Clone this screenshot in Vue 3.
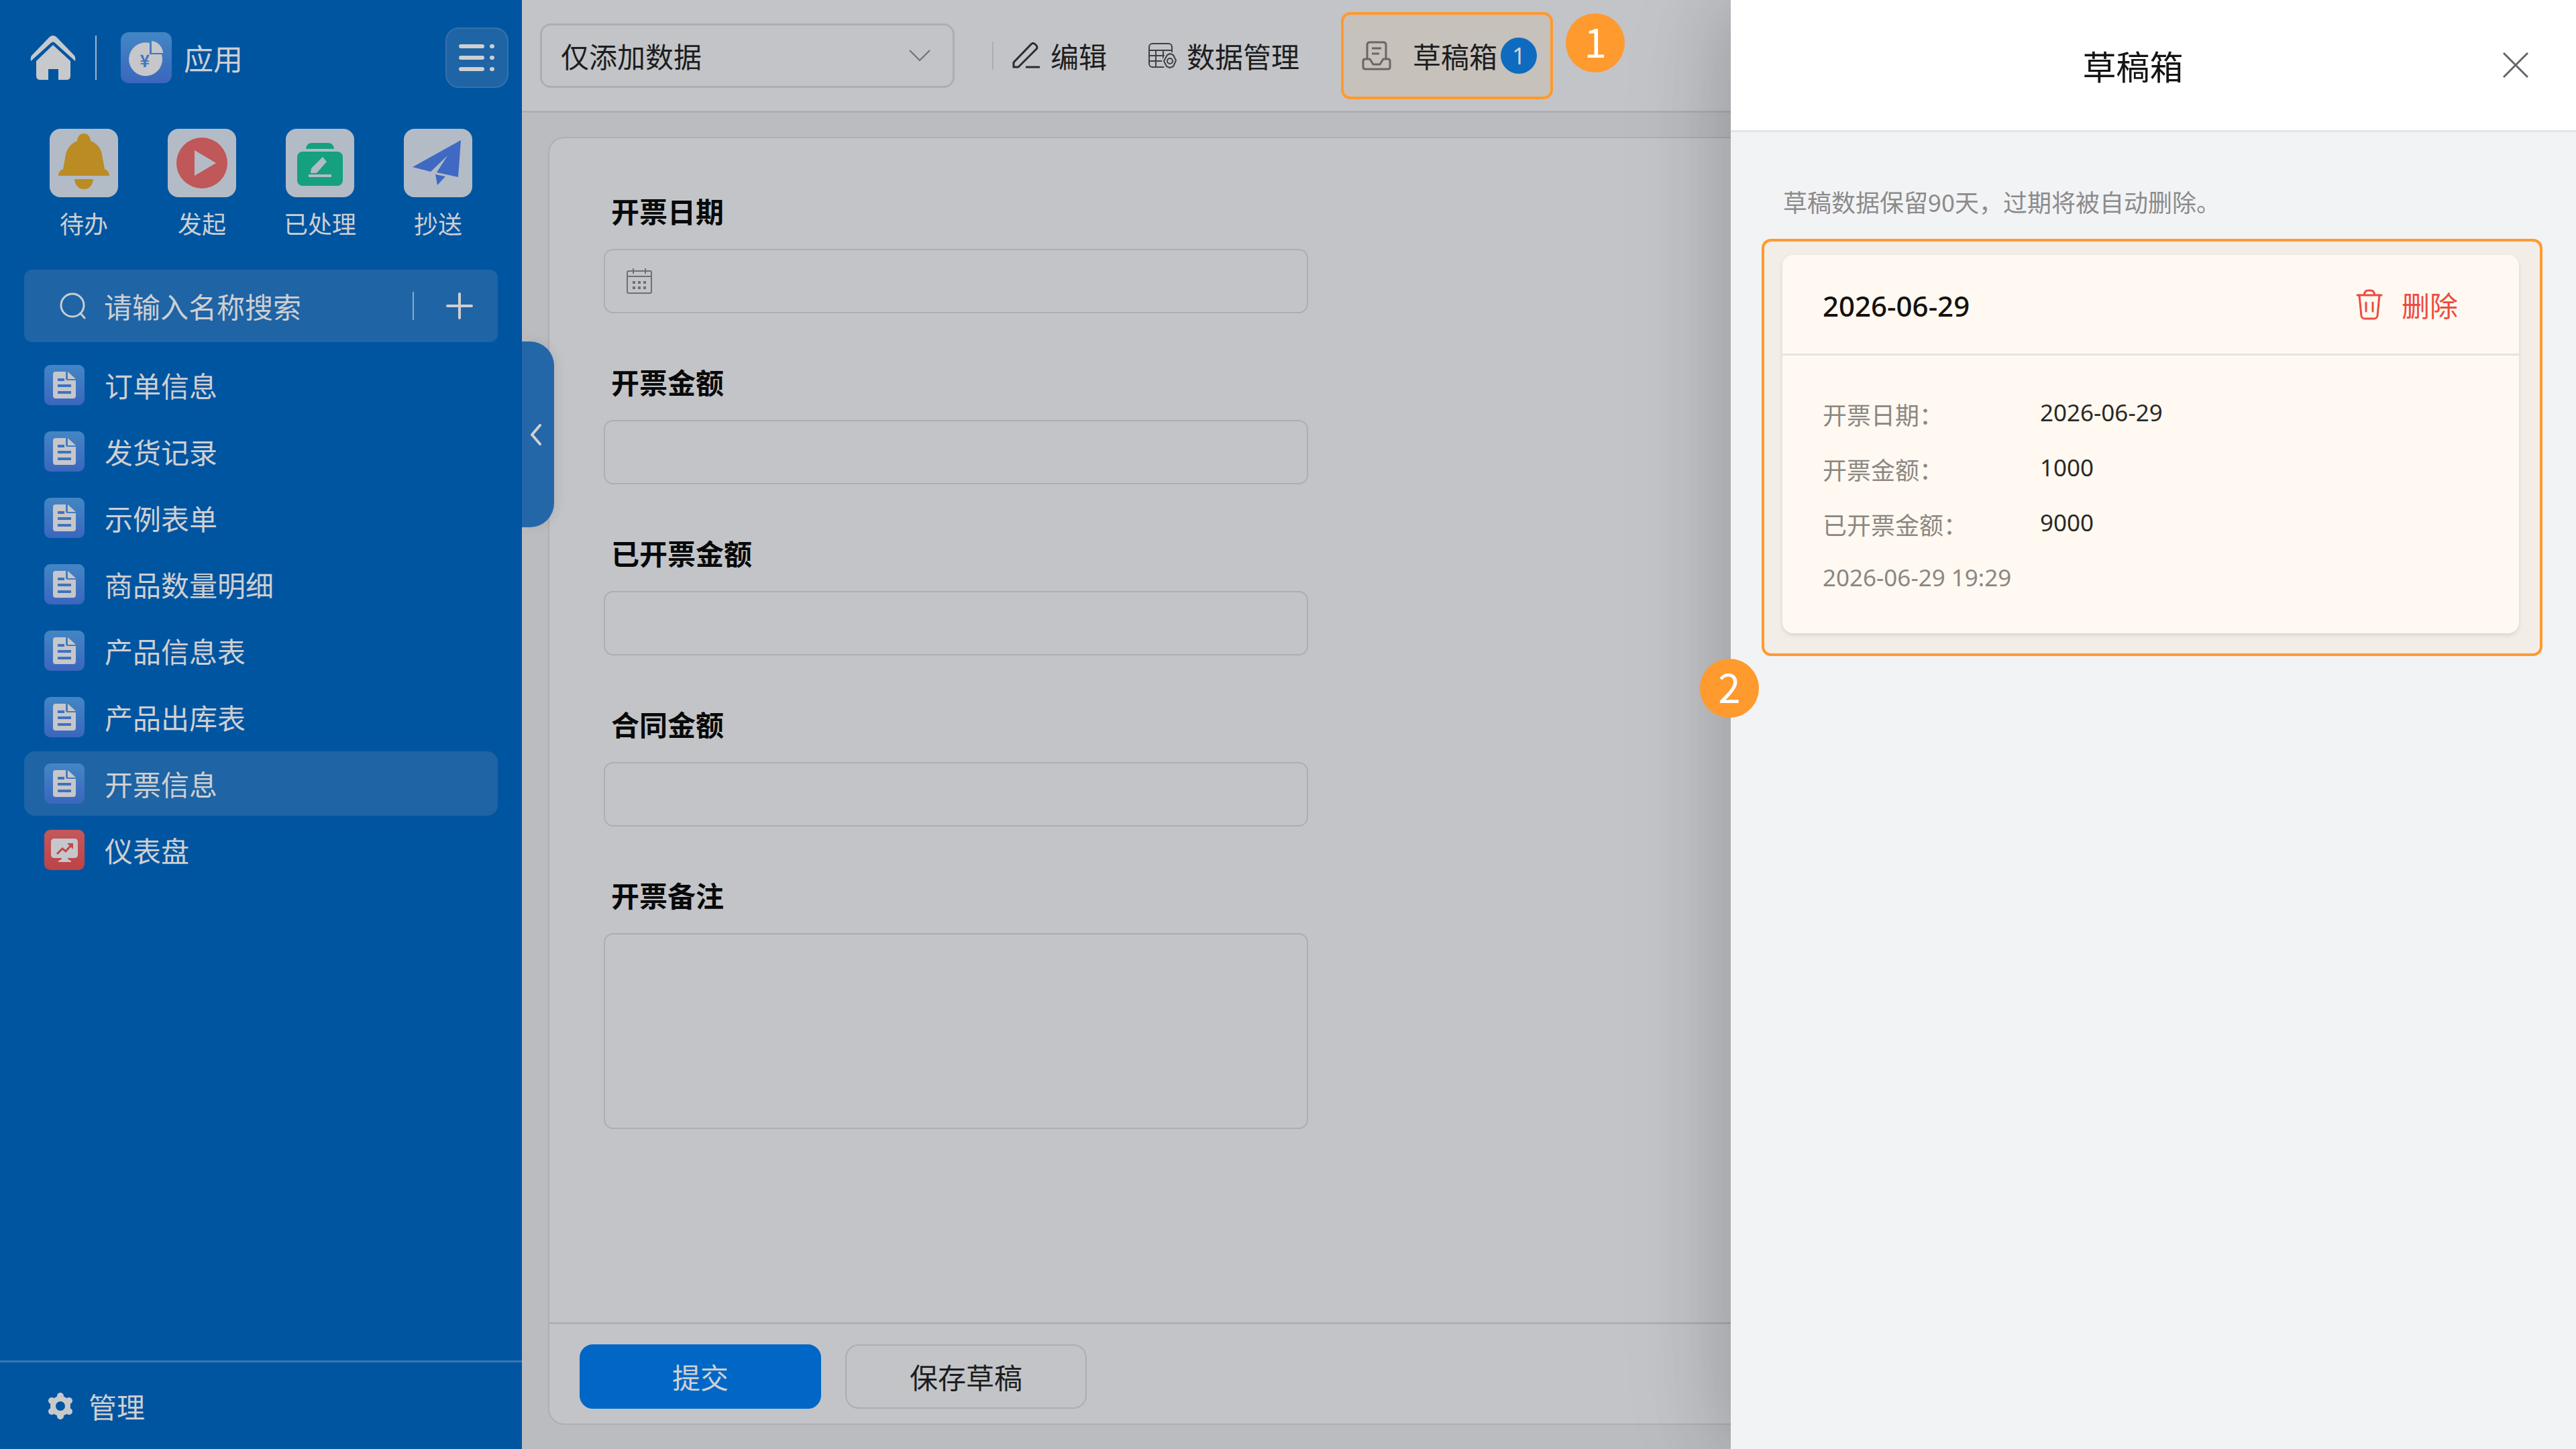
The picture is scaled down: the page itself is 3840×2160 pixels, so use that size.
<script setup>
import { ref } from 'vue';

const quickLinks = [
  { id: 'todo', name: '待办' },
  { id: 'start', name: '发起' },
  { id: 'done', name: '已处理' },
  { id: 'copy', name: '抄送' }
];

const menuItems = [
  { id: 1, name: '订单信息', type: 'form' },
  { id: 2, name: '发货记录', type: 'form' },
  { id: 3, name: '示例表单', type: 'form' },
  { id: 4, name: '商品数量明细', type: 'form' },
  { id: 5, name: '产品信息表', type: 'form' },
  { id: 6, name: '产品出库表', type: 'form' },
  { id: 7, name: '开票信息', type: 'form' },
  { id: 8, name: '仪表盘', type: 'dashboard' }
];

const fields = [
  { id: 'date', label: '开票日期', type: 'date' },
  { id: 'amount', label: '开票金额', type: 'text' },
  { id: 'invoiced', label: '已开票金额', type: 'text' },
  { id: 'contract', label: '合同金额', type: 'text' },
  { id: 'remark', label: '开票备注', type: 'textarea' }
];

const drafts = ref([
  {
    id: 1,
    title: '2026-06-29',
    rows: [
      { label: '开票日期：', value: '2026-06-29' },
      { label: '开票金额：', value: '1000' },
      { label: '已开票金额：', value: '9000' }
    ],
    time: '2026-06-29 19:29'
  }
]);

const activeId = ref(7);
const keyword = ref('');
const mode = ref('add');
const drawerOpen = ref(true);
const form = ref({ date: '', amount: '', invoiced: '', contract: '', remark: '' });

function selectItem(id) {
  activeId.value = id;
}

function removeDraft(id) {
  drafts.value = drafts.value.filter(d => d.id !== id);
}
</script>

<template>
  <div class="app">
    <aside class="sidebar">
      <div class="side-header">
        <button class="icon-button" aria-label="首页">
          <svg width="68" height="68" viewBox="0 0 68 68" fill="#c8c9cc">
            <path d="M29 3Q34-1 39 3L66 31Q68 34 67 39L37 12Q34 9 31 12L1 39Q0 34 2 31Z" />
            <path d="M34 15L60 39V61Q60 67 54 67H42V51H27V67H15Q9 67 9 61V39Z" />
          </svg>
        </button>
        <span class="side-divider"></span>
        <svg class="app-logo" width="76" height="76" viewBox="0 0 76 76">
          <defs>
            <linearGradient id="blueTile" x1="0" y1="0" x2="0" y2="1">
              <stop offset="0" stop-color="#4386c4" />
              <stop offset="1" stop-color="#3b66be" />
            </linearGradient>
            <linearGradient id="redTile" x1="0" y1="0" x2="0" y2="1">
              <stop offset="0" stop-color="#c4585b" />
              <stop offset="1" stop-color="#be4246" />
            </linearGradient>
          </defs>
          <rect width="76" height="76" rx="12" fill="url(#blueTile)" />
          <path d="M43 16A25 25 0 1 0 61 33H43Z" fill="#c6c7ca" />
          <path d="M46 13A19 19 0 0 1 63 31H46Z" fill="#c6c7ca" />
          <text x="36" y="52" text-anchor="middle" font-size="25" font-weight="700" fill="#3f76c1">¥</text>
        </svg>
        <span class="app-name">应用</span>
        <button class="menu-button" aria-label="菜单">
          <svg width="54" height="40" viewBox="0 0 54 40" stroke="#cfcfd1" stroke-width="6" stroke-linecap="round">
            <path d="M3 3H35M3 20H35M3 37H35M49 3H50M49 20H50M49 37H50" />
          </svg>
        </button>
      </div>

      <nav class="quick-links">
        <a v-for="link in quickLinks" :key="link.id" class="quick-link" href="#">
          <svg width="102" height="102" viewBox="0 0 102 102">
            <rect width="102" height="102" rx="16" fill="#b3bcc6" />
            <g v-if="link.id === 'todo'" fill="#bb8b24">
              <path d="M41 18A10 11 0 0 1 61 18C74 23 78 33 79 44L82 60Q89 63 89 70H13Q13 63 20 60L23 44C24 33 29 23 41 18Z" />
              <path d="M37 75H65Q63 90 51 90Q39 90 37 75Z" />
            </g>
            <g v-else-if="link.id === 'start'">
              <circle cx="51" cy="51" r="38" fill="#c05759" />
              <path d="M40 32L72 51L40 70Z" fill="#b3bcc6" />
            </g>
            <g v-else-if="link.id === 'done'">
              <path d="M30 30Q31 21 39 21H63Q71 21 72 30Z" fill="#15a07f" />
              <rect x="17" y="34" width="68" height="51" rx="8" fill="#15a07f" />
              <path d="M55 42L61 49L46 66H37L38 59ZM34 68H68V72H34Z" fill="#b3bcc6" />
            </g>
            <g v-else fill="#3f69c2">
              <path d="M85 17L81 72L49 65L65 40L40 64L13 57Z" />
              <path d="M47 68L62 71L50 84Z" />
            </g>
          </svg>
          <span>{{ link.name }}</span>
        </a>
      </nav>

      <div class="search">
        <svg width="40" height="40" viewBox="0 0 40 40" fill="none" stroke="#c8cdd3" stroke-width="3" stroke-linecap="round">
          <circle cx="19" cy="19" r="17" />
          <path d="M31 31L37 38" />
        </svg>
        <input v-model="keyword" type="text" placeholder="请输入名称搜索" aria-label="请输入名称搜索">
        <span class="search-divider"></span>
        <button class="icon-button" aria-label="新建">
          <svg width="40" height="40" viewBox="0 0 40 40" stroke="#cfcfd1" stroke-width="4" stroke-linecap="round">
            <path d="M2 20H38M20 2V38" />
          </svg>
        </button>
      </div>

      <ul class="menu">
        <li v-for="item in menuItems" :key="item.id">
          <a
            class="menu-item"
            :class="{ active: item.id === activeId }"
            href="#"
            @click.prevent="selectItem(item.id)"
          >
            <svg v-if="item.type === 'form'" width="60" height="60" viewBox="0 0 60 60">
              <rect width="60" height="60" rx="9" fill="url(#blueTile)" />
              <path d="M17 10H32V20Q32 23 35 23H47V46Q47 50 43 50H17Q13 50 13 46V14Q13 10 17 10Z" fill="#c6c7ca" />
              <path d="M35 10L47 21H35Z" fill="#c6c7ca" />
              <path d="M20 22H30M20 31H40M20 41H40" stroke="#3f72c0" stroke-width="4" />
            </svg>
            <svg v-else width="60" height="60" viewBox="0 0 60 60">
              <rect width="60" height="60" rx="9" fill="url(#redTile)" />
              <path d="M15 13H45Q50 13 50 18V37Q50 42 45 42H35Q35 45 40 46V48H21V46Q26 45 26 42H15Q10 42 10 37V18Q10 13 15 13Z" fill="#c6c7ca" />
              <path d="M19 36L27 28L32 32L40 23" fill="none" stroke="#c1484c" stroke-width="3" />
              <path d="M34 20H43V29Z" fill="#c1484c" />
            </svg>
            <span>{{ item.name }}</span>
          </a>
        </li>
      </ul>

      <button class="manage">
        <svg width="40" height="40" viewBox="0 0 40 40">
          <g stroke="#c8c9cc" stroke-width="10" stroke-linecap="round">
            <path d="M20 5V35M7 12L33 28M7 28L33 12" />
          </g>
          <circle cx="20" cy="20" r="15" fill="#c8c9cc" />
          <circle cx="20" cy="20" r="7" fill="#0055a1" />
        </svg>
        <span>管理</span>
      </button>

      <button class="collapse" aria-label="收起">
        <svg width="18" height="32" viewBox="0 0 18 32" fill="none" stroke="#d0d0d2" stroke-width="4" stroke-linecap="round" stroke-linejoin="round">
          <path d="M15 2L3 16L15 30" />
        </svg>
      </button>
    </aside>

    <main class="main">
      <header class="toolbar">
        <div class="select-wrap">
          <select v-model="mode" aria-label="数据权限">
            <option value="add">仅添加数据</option>
          </select>
          <svg class="chevron" width="32" height="18" viewBox="0 0 32 18" fill="none" stroke="#6f7073" stroke-width="2">
            <path d="M1 1L16 16L31 1" />
          </svg>
        </div>
        <span class="tool-divider"></span>
        <div class="tools">
          <button class="tool">
            <svg width="42" height="40" viewBox="0 0 42 40" fill="none" stroke="#2b2c2e" stroke-width="3" stroke-linejoin="round">
              <path d="M2 37V30L28 3Q31 0 34 3L36 5Q38 8 36 10L9 37ZM20 37H41" />
            </svg>
            <span>编辑</span>
          </button>
          <button class="tool">
            <svg width="42" height="38" viewBox="0 0 42 38" fill="none" stroke="#3f4042" stroke-width="2">
              <rect x="1" y="1" width="34" height="35" rx="5" />
              <path d="M1 11H35M1 19H35M1 27H35M11 11V36M22 11V27" />
              <path d="M26 14H42V38H24L20 27Z" fill="#c3c4c8" stroke="none" />
              <path d="M28 18L32 16L37 18L41 26L37 35L32 37L27 35L23 27Z" stroke-linejoin="round" />
              <circle cx="32" cy="27" r="4" />
            </svg>
            <span>数据管理</span>
          </button>
          <button class="tool draft-tool" @click="drawerOpen = true">
            <svg width="44" height="44" viewBox="0 0 44 44" fill="none" stroke="#6b6663" stroke-width="3" stroke-linejoin="round">
              <path d="M8 27V6Q8 2 12 2H32Q36 2 36 6V27M15 11H29M15 19H26" />
              <path d="M5 27H12L17 35H27L32 27H39Q42 27 42 30V39Q42 42 39 42H5Q2 42 2 39V30Q2 27 5 27Z" />
            </svg>
            <span>草稿箱</span>
            <span class="badge">1</span>
            <span class="callout callout-one">1</span>
          </button>
        </div>
      </header>

      <form class="card" @submit.prevent>
        <div class="fields">
          <div v-for="field in fields" :key="field.id" class="field">
            <label :for="field.id">{{ field.label }}</label>
            <textarea v-if="field.type === 'textarea'" :id="field.id" v-model="form[field.id]"></textarea>
            <div v-else class="input-wrap">
              <svg v-if="field.type === 'date'" class="calendar" width="38" height="38" viewBox="0 0 38 38" fill="none" stroke="#6f7073" stroke-width="2">
                <rect x="1" y="4" width="36" height="33" rx="2" />
                <path d="M1 12H37M10 0V8M28 0V8" />
                <path d="M9 21H29M9 29H29" stroke-width="4" stroke-dasharray="4 4" />
              </svg>
              <input :id="field.id" v-model="form[field.id]" type="text">
            </div>
          </div>
        </div>
        <footer class="card-footer">
          <button class="btn primary" type="submit">提交</button>
          <button class="btn" type="button">保存草稿</button>
        </footer>
      </form>
    </main>

    <section v-if="drawerOpen" class="drawer">
      <header class="drawer-header">
        <h2>草稿箱</h2>
        <button class="icon-button" aria-label="关闭" @click="drawerOpen = false">
          <svg width="38" height="38" viewBox="0 0 38 38" stroke="#63666b" stroke-width="3">
            <path d="M1 1L37 37M37 1L1 37" />
          </svg>
        </button>
      </header>
      <div class="drawer-body">
        <p class="tip">草稿数据保留90天，过期将被自动删除。</p>
        <div class="highlight">
          <article v-for="draft in drafts" :key="draft.id" class="draft">
            <header class="draft-header">
              <h3>{{ draft.title }}</h3>
              <button class="delete" @click="removeDraft(draft.id)">
                <svg width="40" height="46" viewBox="0 0 40 46" fill="none" stroke="#ee4b40" stroke-width="3" stroke-linecap="round" stroke-linejoin="round">
                  <path d="M2 9H38M12 9Q13 2 18 2H22Q27 2 28 9" />
                  <path d="M5 9L8 40Q9 44 13 44H27Q31 44 32 40L35 9M15 20V33M25 20V33" />
                </svg>
                <span>删除</span>
              </button>
            </header>
            <div class="draft-body">
              <dl>
                <div v-for="row in draft.rows" :key="row.label" class="draft-row">
                  <dt>{{ row.label }}</dt>
                  <dd>{{ row.value }}</dd>
                </div>
              </dl>
              <p class="time">{{ draft.time }}</p>
            </div>
          </article>
        </div>
      </div>
      <span class="callout callout-two">2</span>
    </section>
  </div>
</template>

<style>
body {
  margin: 0;
}
</style>

<style scoped>
.app,
.app * {
  box-sizing: border-box;
}

.app {
  position: relative;
  display: flex;
  height: 100vh;
  overflow: hidden;
  background: #bbbcc0;
  font-family: "Noto Sans CJK SC", sans-serif;
  font-size: 42px;
  line-height: 60px;
  color: #1d1e20;
}

button,
input,
select,
textarea {
  font: inherit;
  color: inherit;
}

button {
  padding: 0;
  border: none;
  background: none;
  cursor: pointer;
}

a {
  color: inherit;
  text-decoration: none;
}

svg {
  display: block;
  flex-shrink: 0;
}

h2,
h3,
p,
ul,
dl,
dd {
  margin: 0;
  padding: 0;
}

/* Sidebar */
.sidebar {
  position: relative;
  z-index: 2;
  display: flex;
  flex-direction: column;
  flex-shrink: 0;
  width: 778px;
  background: #0055a1;
  color: #cfcfd1;
}

.side-header {
  display: flex;
  align-items: center;
  padding: 41px 20px 0 45px;
}

.side-divider {
  width: 2px;
  height: 66px;
  margin: 0 36px 0 29px;
  background: #a9b3bf;
}

.app-name {
  margin-left: 18px;
  font-size: 44px;
}

.menu-button {
  display: flex;
  align-items: center;
  justify-content: center;
  width: 94px;
  height: 90px;
  margin-left: auto;
  border: 2px solid #3571a9;
  border-radius: 20px;
  background: #1f64a5;
}

.quick-links {
  display: grid;
  grid-template-columns: repeat(4, 1fr);
  padding: 61px 37px 0;
}

.quick-link {
  display: flex;
  flex-direction: column;
  align-items: center;
  gap: 14px;
  font-size: 36px;
  line-height: 48px;
}

.search {
  display: flex;
  align-items: center;
  height: 108px;
  margin: 46px 36px 16px;
  padding: 0 37px 0 53px;
  border-radius: 12px;
  background: #1f64a5;
}

.search input {
  flex: 1;
  min-width: 0;
  height: 60px;
  margin-left: 26px;
  padding: 0;
  border: none;
  outline: none;
  background: none;
}

.search input::placeholder {
  color: #cfcfd1;
  opacity: 1;
}

.search-divider {
  width: 2px;
  height: 42px;
  margin-right: 48px;
  background: #8ea9c4;
}

.menu {
  display: flex;
  flex: 1;
  flex-direction: column;
  gap: 3px;
  padding: 0 36px;
  list-style: none;
}

.menu-item {
  display: flex;
  align-items: center;
  gap: 30px;
  height: 96px;
  padding: 0 30px;
  border-radius: 16px;
}

.menu-item.active {
  background: #1f64a5;
}

.manage {
  display: flex;
  align-items: center;
  gap: 22px;
  height: 132px;
  padding: 0 70px;
  border-top: 3px solid #3b75b0;
}

.collapse {
  position: absolute;
  top: 509px;
  left: 100%;
  display: flex;
  align-items: center;
  justify-content: center;
  width: 48px;
  height: 277px;
  padding-right: 6px;
  border-radius: 0 36px 36px 0;
  background: #2467a8;
  box-shadow: 4px 0 16px rgba(0, 0, 0, 0.08);
}

/* Toolbar */
.main {
  display: flex;
  flex: 1;
  flex-direction: column;
  min-width: 0;
}

.toolbar {
  display: flex;
  align-items: center;
  height: 168px;
  padding-left: 27px;
  border-bottom: 3px solid #aeafb3;
  background: #c3c4c8;
}

.select-wrap {
  position: relative;
  width: 618px;
}

select {
  display: block;
  width: 100%;
  height: 96px;
  padding: 0 90px 0 28px;
  border: 3px solid #a9afb7;
  border-radius: 16px;
  background: none;
  appearance: none;
}

.chevron {
  position: absolute;
  top: 39px;
  right: 36px;
  pointer-events: none;
}

.tool-divider {
  width: 2px;
  height: 42px;
  margin: 0 28px 0 56px;
  background: #a9afb7;
}

.tools {
  display: flex;
  align-items: center;
  gap: 62px;
}

.tool {
  display: flex;
  align-items: center;
  gap: 15px;
  white-space: nowrap;
}

.draft-tool {
  position: relative;
  gap: 32px;
  height: 130px;
  padding: 0 20px 0 27px;
  border: 4px solid #ff9a2e;
  border-radius: 14px;
  background: #c6c1bb;
}

.badge {
  width: 54px;
  height: 54px;
  margin-left: -27px;
  border-radius: 50%;
  background: #0f6bc0;
  color: #d3d3d5;
  font-family: "Noto Sans", sans-serif;
  font-size: 35px;
  line-height: 54px;
  text-align: center;
}

.callout {
  position: absolute;
  width: 88px;
  height: 88px;
  border-radius: 50%;
  background: #ff9a2e;
  color: #fff;
  font-size: 60px;
  line-height: 80px;
  text-align: center;
}

.callout-one {
  top: -2px;
  right: -111px;
}

/* Form card */
.card {
  display: flex;
  flex: 1;
  flex-direction: column;
  margin: 36px 39px;
  border: 2px solid #aeafb3;
  border-radius: 24px;
  background: #c3c4c8;
}

.fields {
  display: flex;
  flex: 1;
  flex-direction: column;
  gap: 74px;
  padding: 80px 81px 0;
}

.field {
  width: 100%;
  max-width: 1050px;
}

.field label {
  display: block;
  margin-bottom: 30px;
  padding-left: 11px;
  font-weight: 700;
  line-height: 55px;
  color: #08090a;
}

.input-wrap {
  display: flex;
  align-items: center;
  height: 96px;
  padding: 0 32px;
  border: 2px solid #a9afb7;
  border-radius: 14px;
}

.input-wrap input {
  flex: 1;
  min-width: 0;
  height: 60px;
  border: none;
  outline: none;
  background: none;
}

.field textarea {
  display: block;
  width: 100%;
  height: 292px;
  padding: 18px 32px;
  border: 2px solid #a9afb7;
  border-radius: 14px;
  outline: none;
  background: none;
  resize: none;
}

.card-footer {
  display: flex;
  gap: 36px;
  padding: 30px 45px 22px;
  border-top: 3px solid #aeafb3;
}

.btn {
  width: 360px;
  height: 96px;
  border: 2px solid #a9afb7;
  border-radius: 20px;
}

.btn.primary {
  border-color: #0067c6;
  background: #0067c6;
  color: #d0d0d2;
}

/* Draft drawer */
.drawer {
  position: absolute;
  top: 0;
  right: 0;
  bottom: 0;
  z-index: 3;
  width: 1260px;
  background: #f2f3f5;
  box-shadow: -18px 0 96px rgba(0, 0, 0, 0.13), -24px 0 160px rgba(0, 0, 0, 0.07);
}

.drawer-header {
  display: flex;
  align-items: center;
  gap: 24px;
  height: 197px;
  padding: 0 71px 0 72px;
  border-bottom: 3px solid #e3e4e6;
  background: #fff;
}

.drawer-header h2 {
  flex: 1;
  font-size: 50px;
  font-weight: 400;
  text-align: center;
  color: #141414;
}

.drawer-body {
  padding: 76px 50px 0 46px;
}

.tip {
  margin-bottom: 29px;
  padding-left: 32px;
  font-size: 36px;
  line-height: 54px;
  color: #8b8b8b;
}

.highlight {
  padding: 20px 31px 30px 27px;
  border: 4px solid #ff9a2e;
  border-radius: 14px;
  background: #f3ede8;
}

.draft {
  border-radius: 16px;
  background: #fff9f2;
  box-shadow: 0 3px 6px rgba(0, 0, 0, 0.1);
}

.draft-header {
  display: flex;
  align-items: center;
  justify-content: space-between;
  height: 150px;
  padding: 0 91px 0 60px;
  border-bottom: 3px solid #e9e3dd;
}

.draft-header h3 {
  padding-top: 4px;
  font-family: "Noto Sans", sans-serif;
  font-size: 42px;
  font-weight: 500;
  color: #14110e;
}

.delete {
  display: flex;
  align-items: center;
  gap: 28px;
  color: #ee4b40;
}

.draft-body {
  padding: 46px 60px 44px;
}

.draft-row {
  display: grid;
  grid-template-columns: 324px 1fr;
  font-size: 36px;
  line-height: 82px;
}

.draft-row dt {
  color: #8c8781;
}

.draft-row dd {
  font-family: "Noto Sans", sans-serif;
  font-size: 35px;
  line-height: 78px;
  color: #2b2926;
}

.time {
  font-family: "Noto Sans", sans-serif;
  font-size: 35px;
  line-height: 78px;
  color: #8c8781;
}

.callout-two {
  top: 982px;
  left: -46px;
}
</style>
